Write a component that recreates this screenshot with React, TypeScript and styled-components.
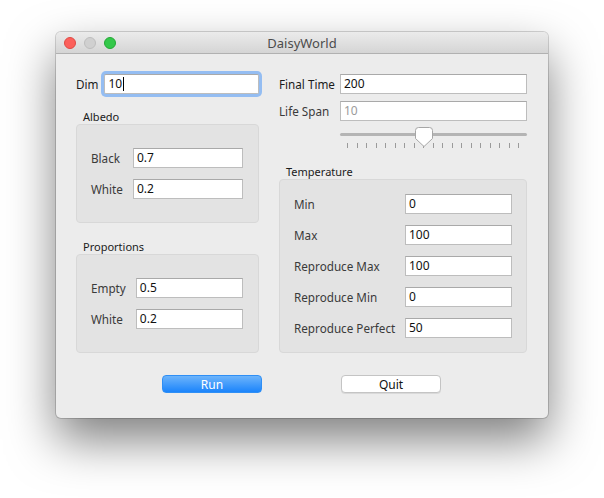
import styled, { createGlobalStyle } from 'styled-components';

const GlobalStyle = createGlobalStyle`
  html, body {
    margin: 0;
    padding: 0;
    background: #ffffff;
  }
  body {
    font-family: "Noto Sans", "DejaVu Sans", sans-serif;
    font-size: 12px;
    color: #1b1b1b;
  }
`;

const Page = styled.div`
  padding: 32px 0 0 56px;
  width: 604px;
  height: 498px;
  box-sizing: border-box;
  overflow: hidden;
`;

const Window = styled.div`
  width: 492px;
  height: 386px;
  box-sizing: border-box;
  background: #ececec;
  border-radius: 5px;
  overflow: hidden;
  box-shadow: 0 22px 48px rgba(0, 0, 0, 0.5), 0 0 0 1px rgba(0, 0, 0, 0.16);
  display: flex;
  flex-direction: column;
`;

const TitleBar = styled.div`
  height: 22px;
  flex: 0 0 22px;
  box-sizing: border-box;
  position: relative;
  display: flex;
  align-items: center;
  justify-content: center;
  background: linear-gradient(#ebebeb, #d5d5d5);
  border-bottom: 1px solid #b1b1b1;
  font-size: 13px;
  color: #4c4c4c;
`;

const Lights = styled.div`
  position: absolute;
  left: 8px;
  top: 5px;
  display: flex;
  gap: 8px;
`;

const Light = styled.span<{ $color: string; $edge: string }>`
  width: 12px;
  height: 12px;
  border-radius: 50%;
  box-sizing: border-box;
  background: ${(p) => p.$color};
  border: 1px solid ${(p) => p.$edge};
`;

const Content = styled.div`
  flex: 1;
  padding: 20px 21px 0 20px;
  display: flex;
  flex-direction: column;
`;

const Columns = styled.div`
  display: grid;
  grid-template-columns: 183px 248px;
  column-gap: 20px;
`;

const Column = styled.div`
  display: flex;
  flex-direction: column;
`;

const FormGrid = styled.div<{ $gap: number; $rowGap: number }>`
  display: grid;
  grid-template-columns: auto 1fr;
  column-gap: ${(p) => p.$gap}px;
  row-gap: ${(p) => p.$rowGap}px;
  align-items: center;
`;

const Label = styled.span<{ $muted?: boolean }>`
  white-space: nowrap;
  font-size: 11.7px;
  color: ${(p) => (p.$muted ? '#3a3a3a' : '#1b1b1b')};
`;

const Field = styled.div<{ $focused?: boolean; $disabled?: boolean }>`
  height: 20px;
  box-sizing: border-box;
  background: #fff;
  border: 1px solid #bdbdbd;
  border-top-color: #a9a9a9;
  padding: 0 3px;
  line-height: 18px;
  font-size: 12px;
  color: ${(p) => (p.$disabled ? '#9b9b9b' : '#111')};
  display: flex;
  align-items: center;
  box-shadow: ${(p) => (p.$focused ? '0 0 0 3px #94bdf2' : 'none')};
  border-radius: ${(p) => (p.$focused ? '2px' : '0')};
`;

const Caret = styled.span`
  display: inline-block;
  width: 1px;
  height: 14px;
  background: #000;
  margin-left: 1px;
`;

const SectionTitle = styled.div<{ $top: number }>`
  margin-top: ${(p) => p.$top}px;
  height: 15px;
  line-height: 15px;
  padding-left: 7px;
  font-size: 11px;
  color: #1b1b1b;
`;

const GroupBox = styled.div<{ $pad: number; $right: number }>`
  background: #e3e3e3;
  border: 1px solid #d8d8d8;
  border-radius: 4px;
  padding: ${(p) => p.$pad}px ${(p) => p.$right}px ${(p) => p.$pad}px 14px;
`;

const TempGrid = styled.div`
  display: grid;
  grid-template-columns: 1fr 107px;
  row-gap: 11px;
  align-items: center;
`;

const SliderWrap = styled.div`
  position: relative;
  margin: 6px 0 0 61px;
  height: 22px;
`;

const Track = styled.div`
  margin-top: 6px;
  height: 3px;
  border-radius: 2px;
  background: #b4b4b4;
`;

const Ticks = styled.div`
  margin-top: 7px;
  padding: 0 8px 0 7px;
  display: flex;
  justify-content: space-between;
`;

const Tick = styled.span`
  width: 1px;
  height: 5px;
  background: #9a9a9a;
`;

const Thumb = styled.svg`
  position: absolute;
  left: 75px;
  top: 0;
`;

const Footer = styled.div`
  margin-top: 22px;
  display: flex;
  justify-content: center;
  gap: 79px;
`;

const Button = styled.div<{ $primary?: boolean }>`
  width: 100px;
  height: 18px;
  box-sizing: border-box;
  border-radius: 4px;
  display: flex;
  align-items: center;
  justify-content: center;
  font-size: 12px;
  color: ${(p) => (p.$primary ? '#fff' : '#111')};
  background: ${(p) => (p.$primary ? 'linear-gradient(#6db4fb, #1b84fb)' : '#fff')};
  border: 1px solid ${(p) => (p.$primary ? '#2f8ff5' : '#c4c4c4')};
  box-shadow: ${(p) => (p.$primary ? 'none' : '0 1px 0 rgba(0,0,0,0.08)')};
`;

const albedo = [
  ['Black', '0.7'],
  ['White', '0.2'],
];

const proportions = [
  ['Empty', '0.5'],
  ['White', '0.2'],
];

const temperature = [
  ['Min', '0'],
  ['Max', '100'],
  ['Reproduce Max', '100'],
  ['Reproduce Min', '0'],
  ['Reproduce Perfect', '50'],
];

export default function App() {
  return (
    <Page>
      <GlobalStyle />
      <Window>
        <TitleBar>
          <Lights>
            <Light $color="#fc605b" $edge="#de4a44" />
            <Light $color="#d0d0d0" $edge="#bdbdbd" />
            <Light $color="#34c84a" $edge="#24a835" />
          </Lights>
          DaisyWorld
        </TitleBar>
        <Content>
          <Columns>
            <Column>
              <FormGrid $gap={6} $rowGap={0}>
                <Label>Dim</Label>
                <Field $focused>
                  10
                  <Caret />
                </Field>
              </FormGrid>
              <SectionTitle $top={15}>Albedo</SectionTitle>
              <GroupBox $pad={23} $right={15}>
                <FormGrid $gap={10} $rowGap={11}>
                  {albedo.map(([k, v]) => [
                    <Label key={k + 'l'} $muted>{k}</Label>,
                    <Field key={k + 'f'}>{v}</Field>,
                  ])}
                </FormGrid>
              </GroupBox>
              <SectionTitle $top={16}>Proportions</SectionTitle>
              <GroupBox $pad={23} $right={15}>
                <FormGrid $gap={10} $rowGap={11}>
                  {proportions.map(([k, v]) => [
                    <Label key={k + 'l'} $muted>{k}</Label>,
                    <Field key={k + 'f'}>{v}</Field>,
                  ])}
                </FormGrid>
              </GroupBox>
            </Column>
            <Column>
              <FormGrid $gap={5} $rowGap={7}>
                <Label>Final Time</Label>
                <Field>200</Field>
                <Label $muted>Life Span</Label>
                <Field $disabled>10</Field>
              </FormGrid>
              <SliderWrap>
                <Track />
                <Ticks>
                  {Array.from({ length: 19 }, (_, i) => (
                    <Tick key={i} />
                  ))}
                </Ticks>
                <Thumb width="18" height="21" viewBox="0 0 18 21">
                  <path
                    d="M3.5 0.5 H14.5 Q17.5 0.5 17.5 3.5 V11.5 L9 19.5 L0.5 11.5 V3.5 Q0.5 0.5 3.5 0.5 Z"
                    fill="#ffffff"
                    stroke="#a6a6a6"
                    strokeWidth="1"
                  />
                </Thumb>
              </SliderWrap>
              <SectionTitle $top={15}>Temperature</SectionTitle>
              <GroupBox $pad={14} $right={14}>
                <TempGrid>
                  {temperature.map(([k, v]) => [
                    <Label key={k + 'l'} $muted>{k}</Label>,
                    <Field key={k + 'f'}>{v}</Field>,
                  ])}
                </TempGrid>
              </GroupBox>
            </Column>
          </Columns>
          <Footer>
            <Button $primary>Run</Button>
            <Button>Quit</Button>
          </Footer>
        </Content>
      </Window>
    </Page>
  );
}
